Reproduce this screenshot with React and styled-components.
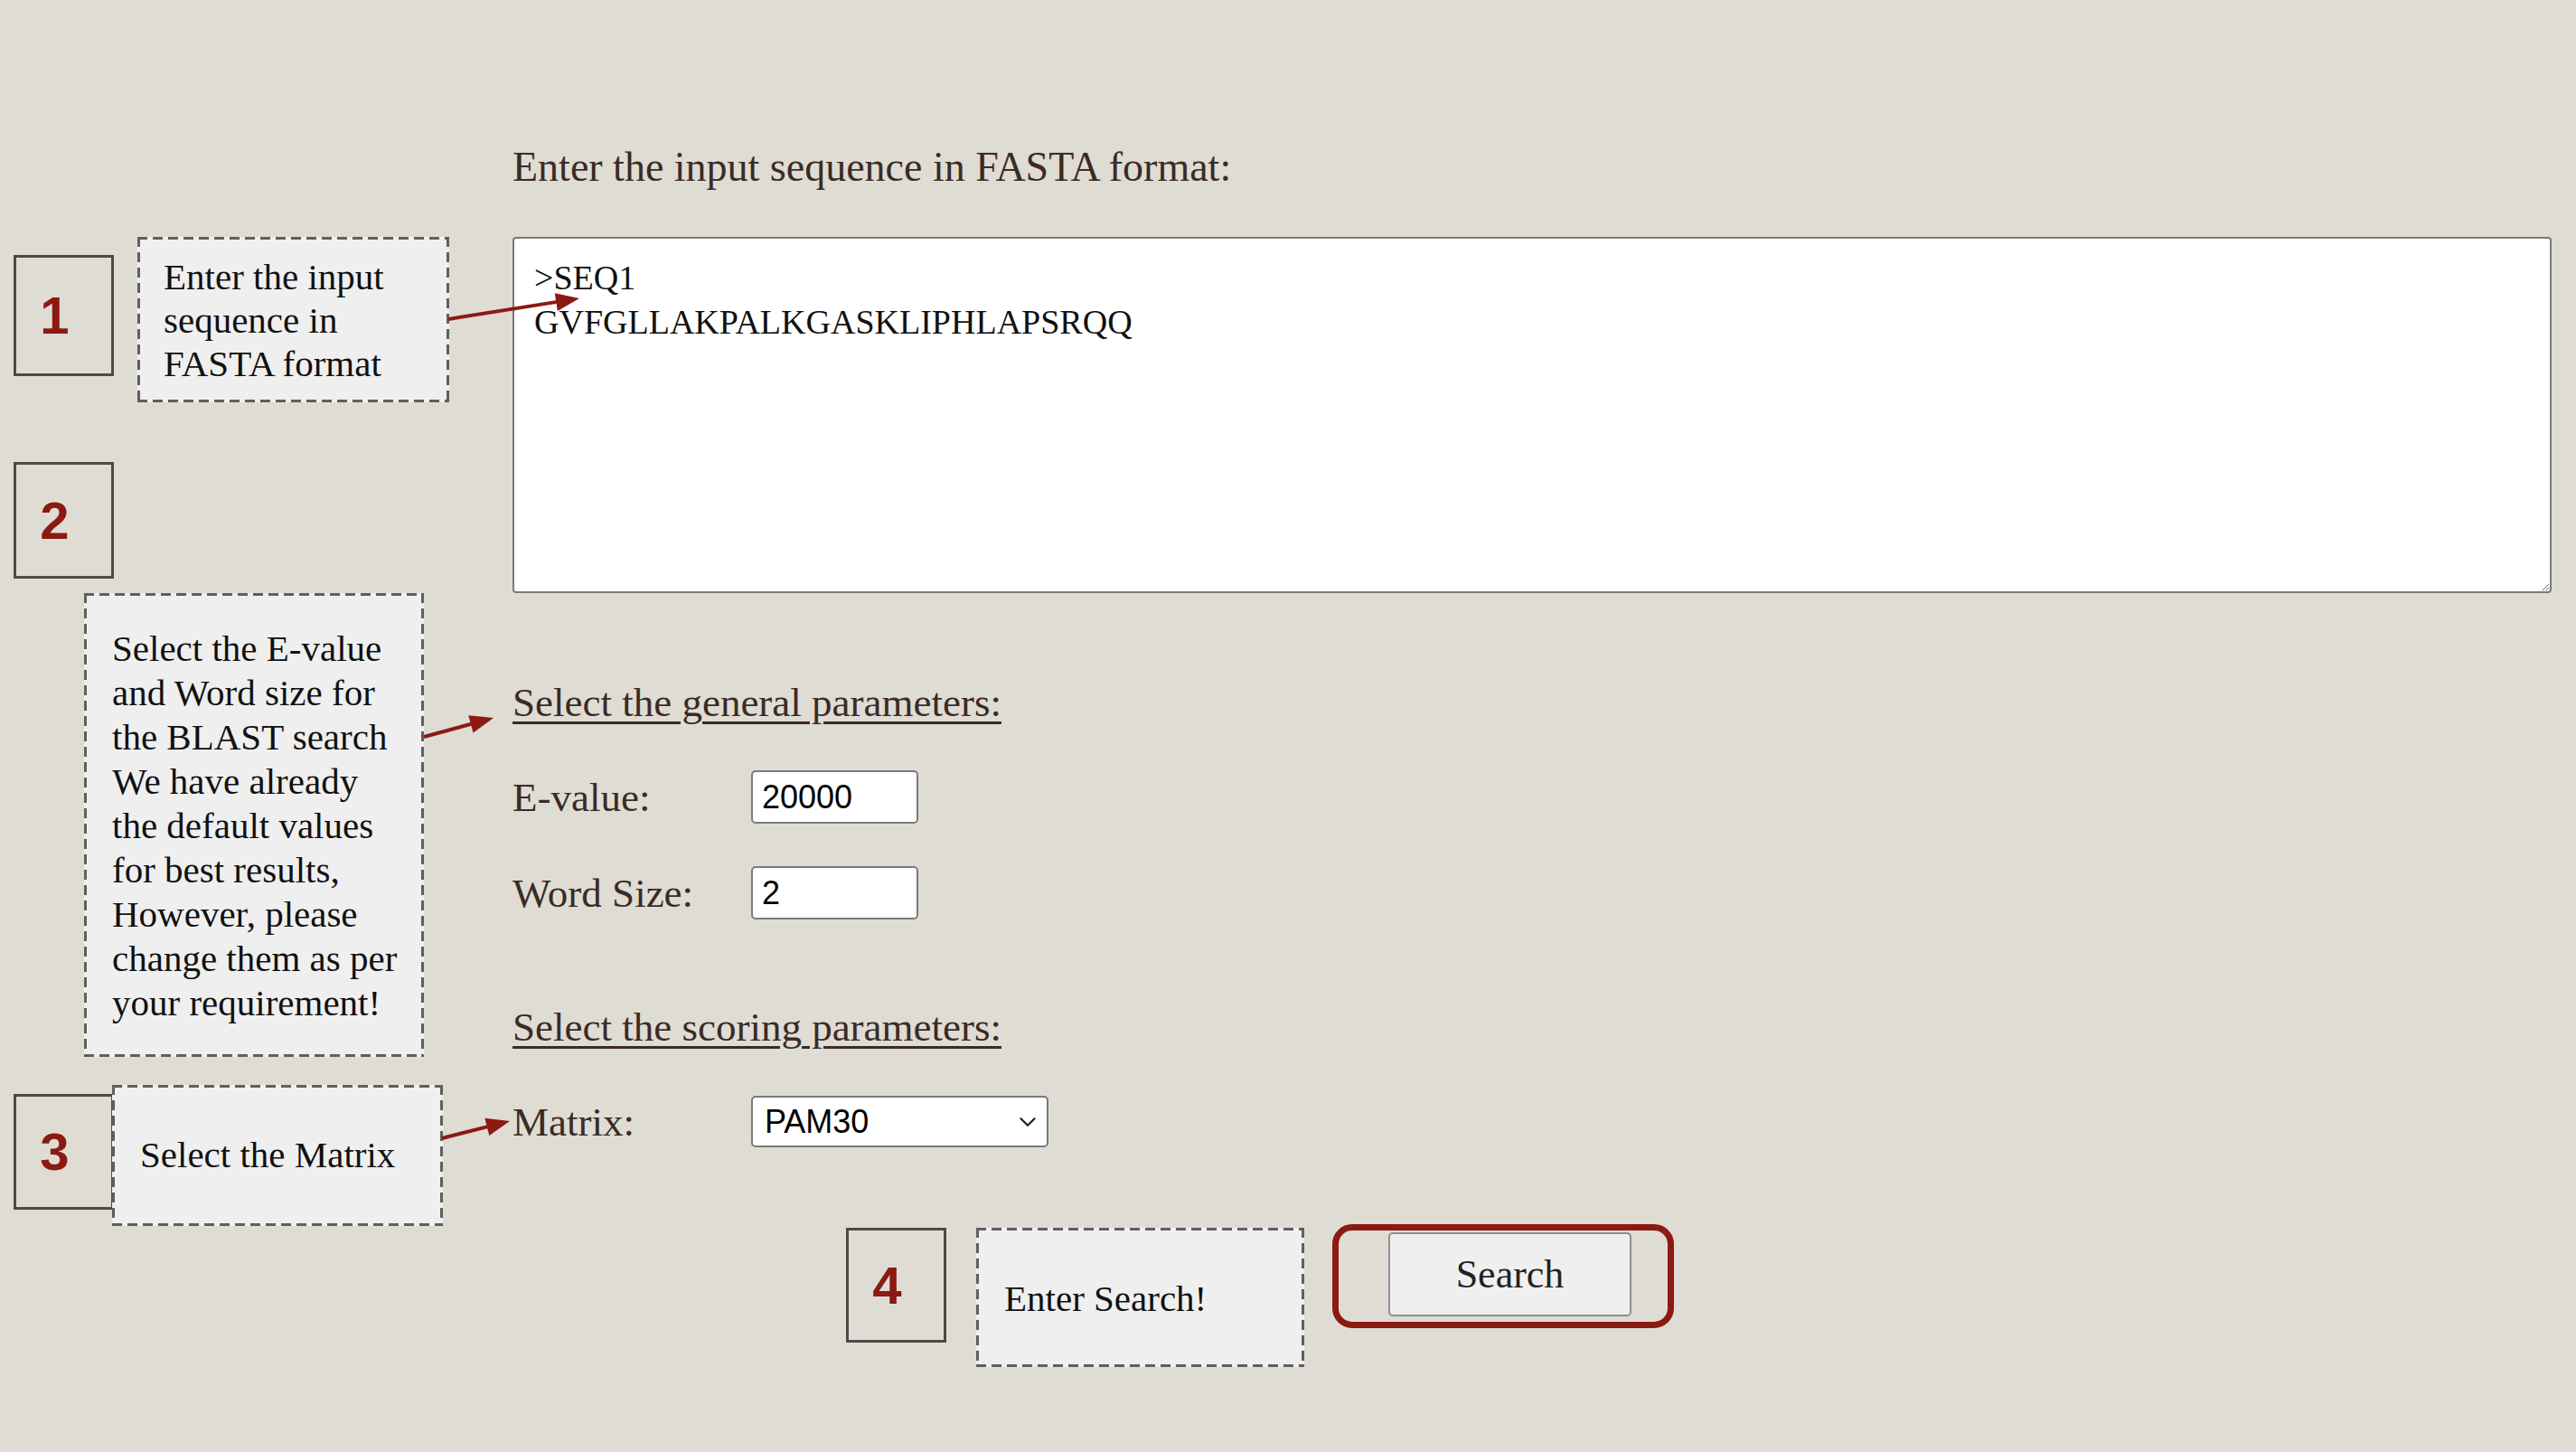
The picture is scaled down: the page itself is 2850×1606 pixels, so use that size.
import React from "react";
import styled, { createGlobalStyle } from "styled-components";
import { ChevronDown } from "lucide-react";

const RED = "#8b1a12";
const INK = "#3b2b25";
const DASH = "#5f5f5f";
const SERIF = `"Liberation Serif", "DejaVu Serif", serif`;
const SANS = `"Liberation Sans", Arial, sans-serif`;

const GlobalStyle = createGlobalStyle`
  html, body {
    margin: 0;
    padding: 0;
    background: #dfdcd4;
  }
  * {
    box-sizing: border-box;
  }
`;

// arrows from the notes to the fields they explain
const arrows = [
  { x1: 496, y1: 353, x2: 641, y2: 330 },
  { x1: 469, y1: 815, x2: 546, y2: 794 },
  { x1: 489, y1: 1259, x2: 564, y2: 1240 },
];

const arrowHead = ({ x1, y1, x2, y2 }) => {
  const dx = x2 - x1;
  const dy = y2 - y1;
  const len = Math.sqrt(dx * dx + dy * dy);
  const ux = dx / len;
  const uy = dy / len;
  const bx = x2 - ux * 26;
  const by = y2 - uy * 26;
  const px = -uy * 10;
  const py = ux * 10;
  return `${x2},${y2} ${bx + px},${by + py} ${bx - px},${by - py}`;
};

const Arrows = () => (
  <Overlay width="2850" height="1606" viewBox="0 0 2850 1606">
    {arrows.map((a, i) => {
      const len = Math.hypot(a.x2 - a.x1, a.y2 - a.y1);
      const ex = a.x2 - ((a.x2 - a.x1) / len) * 20;
      const ey = a.y2 - ((a.y2 - a.y1) / len) * 20;
      return (
        <g key={i}>
          <line x1={a.x1} y1={a.y1} x2={ex} y2={ey} stroke={RED} strokeWidth="4" />
          <polygon points={arrowHead(a)} fill={RED} />
        </g>
      );
    })}
  </Overlay>
);

const App = () => {
  return (
    <>
      <GlobalStyle />
      <Page>
        <Guide>
          <StepRow $gap={26}>
            <NumBox $h={134} $top={20}>1</NumBox>
            <Note $w={345} $h={183} $pt={20} $pl={29}>
              Enter the input
              <br />
              sequence in
              <br />
              FASTA format
            </Note>
          </StepRow>

          <NumBox $h={129} $top={66} $left={15}>
            2
          </NumBox>
          <Note $w={376} $h={513} $pt={37} $pl={31} $top={16} $left={93} $lh={49}>
            Select the E-value
            <br />
            and Word size for
            <br />
            the BLAST search
            <br />
            We have already
            <br />
            the default values
            <br />
            for best results,
            <br />
            However, please
            <br />
            change them as per
            <br />
            your requirement!
          </Note>

          <StepRow $top={31}>
            <NumBox $h={128} $top={10}>3</NumBox>
            <Note $w={366} $h={156} $pt={53} $pl={31} $left={-2}>
              Select the Matrix
            </Note>
          </StepRow>
        </Guide>

        <Form>
          <Heading>Enter the input sequence in FASTA format:</Heading>
          <SequenceBox
            defaultValue={">SEQ1\nGVFGLLAKPALKGASKLIPHLAPSRQQ"}
            spellCheck={false}
          />

          <SectionTitle $top={95}>Select the general parameters:</SectionTitle>
          <FieldRow $top={49}>
            <Label>E-value:</Label>
            <TextInput defaultValue="20000" />
          </FieldRow>
          <FieldRow $top={47}>
            <Label>Word Size:</Label>
            <TextInput defaultValue="2" />
          </FieldRow>

          <SectionTitle $top={93}>Select the scoring parameters:</SectionTitle>
          <FieldRow $top={50}>
            <Label>Matrix:</Label>
            <SelectWrap>
              <Select defaultValue="PAM30">
                <option>PAM30</option>
                <option>PAM70</option>
                <option>BLOSUM45</option>
                <option>BLOSUM62</option>
                <option>BLOSUM80</option>
              </Select>
              <Chevron>
                <ChevronDown size={30} strokeWidth={1.8} color="#222" />
              </Chevron>
            </SelectWrap>
          </FieldRow>

          <SubmitRow>
            <NumBox $h={127} $top={4}>4</NumBox>
            <Note $w={363} $h={154} $pt={54} $pl={31} $top={4} $left={33}>
              Enter Search!
            </Note>
            <Highlight>
              <SearchButton type="button">Search</SearchButton>
            </Highlight>
          </SubmitRow>
        </Form>

        <Arrows />
      </Page>
    </>
  );
};

const Page = styled.div`
  position: relative;
  display: grid;
  grid-template-columns: 567px 2256px;
  width: 2850px;
  min-height: 1606px;
  background: #dfdcd4;
`;

const Overlay = styled.svg`
  position: absolute;
  left: 0;
  top: 0;
  pointer-events: none;
`;

const Guide = styled.div`
  display: flex;
  flex-direction: column;
  align-items: flex-start;
  padding-top: 262px;
`;

const StepRow = styled.div`
  display: flex;
  align-items: flex-start;
  gap: ${(p) => p.$gap || 0}px;
  padding-left: 15px;
  margin-top: ${(p) => p.$top || 0}px;
`;

const NumBox = styled.div`
  display: flex;
  align-items: center;
  justify-content: center;
  flex: none;
  width: 111px;
  height: ${(p) => p.$h}px;
  margin-top: ${(p) => p.$top || 0}px;
  margin-left: ${(p) => p.$left || 0}px;
  padding-right: 20px;
  border: 3px solid #4a4a4a;
  color: ${RED};
  font-family: ${SANS};
  font-weight: 700;
  font-size: 58px;
  line-height: 1;
`;

const Note = styled.div`
  position: relative;
  flex: none;
  width: ${(p) => p.$w}px;
  height: ${(p) => p.$h}px;
  margin-top: ${(p) => p.$top || 0}px;
  margin-left: ${(p) => p.$left || 0}px;
  padding: ${(p) => p.$pt}px 0 0 ${(p) => p.$pl}px;
  background:
    linear-gradient(to right, ${DASH} 11px, transparent 11px) top left / 17px 3px repeat-x,
    linear-gradient(to right, ${DASH} 11px, transparent 11px) bottom left / 17px 3px repeat-x,
    linear-gradient(to bottom, ${DASH} 11px, transparent 11px) top left / 3px 17px repeat-y,
    linear-gradient(to bottom, ${DASH} 11px, transparent 11px) top right / 3px 17px repeat-y,
    #efefef;
  color: #111;
  font-family: ${SERIF};
  font-size: 41px;
  line-height: ${(p) => p.$lh || 48}px;
  white-space: nowrap;
`;

const Form = styled.div`
  display: flex;
  flex-direction: column;
  align-items: flex-start;
  padding-top: 159px;
`;

const Heading = styled.h1`
  margin: 0;
  font-family: ${SERIF};
  font-weight: 400;
  font-size: 46px;
  line-height: 52px;
  color: ${INK};
`;

const SequenceBox = styled.textarea`
  display: block;
  width: 2256px;
  height: 394px;
  margin-top: 51px;
  padding: 19px 22px;
  background: #fff;
  border: 2px solid #7a7a7a;
  border-radius: 4px;
  font-family: ${SERIF};
  font-size: 38px;
  line-height: 49px;
  color: #111;
  outline: none;
`;

const SectionTitle = styled.h2`
  margin: ${(p) => p.$top}px 0 0;
  font-family: ${SERIF};
  font-weight: 400;
  font-size: 45px;
  line-height: 52px;
  color: ${INK};
  text-decoration: underline;
  text-decoration-thickness: 3px;
  text-underline-offset: 6px;
`;

const FieldRow = styled.div`
  display: flex;
  align-items: center;
  margin-top: ${(p) => p.$top}px;
`;

const Label = styled.label`
  width: 264px;
  font-family: ${SERIF};
  font-size: 45px;
  line-height: 52px;
  color: ${INK};
`;

const TextInput = styled.input`
  width: 185px;
  height: 59px;
  padding: 0 10px;
  background: #fff;
  border: 2px solid #7a7a7a;
  border-radius: 5px;
  font-family: ${SANS};
  font-size: 36px;
  color: #000;
  outline: none;
`;

const SelectWrap = styled.div`
  position: relative;
  width: 329px;
  height: 57px;
`;

const Select = styled.select`
  appearance: none;
  width: 100%;
  height: 100%;
  padding: 0 50px 0 13px;
  background: #fff;
  border: 2px solid #7a7a7a;
  border-radius: 5px;
  font-family: ${SANS};
  font-size: 36px;
  color: #000;
  outline: none;
`;

const Chevron = styled.span`
  position: absolute;
  right: 8px;
  top: 14px;
  display: flex;
  pointer-events: none;
`;

const SubmitRow = styled.div`
  display: flex;
  align-items: flex-start;
  margin: 85px 0 0 369px;
  & > :last-child {
    margin-left: 31px;
  }
`;

const Highlight = styled.div`
  width: 378px;
  height: 115px;
  padding: 2px 0 0 55px;
  border: 7px solid ${RED};
  border-radius: 22px;
`;

const SearchButton = styled.button`
  width: 269px;
  height: 93px;
  background: #efefef;
  border: 2px solid #8f8f8f;
  border-radius: 5px;
  font-family: ${SERIF};
  font-size: 44px;
  color: #222;
  cursor: pointer;
`;

export default App;
